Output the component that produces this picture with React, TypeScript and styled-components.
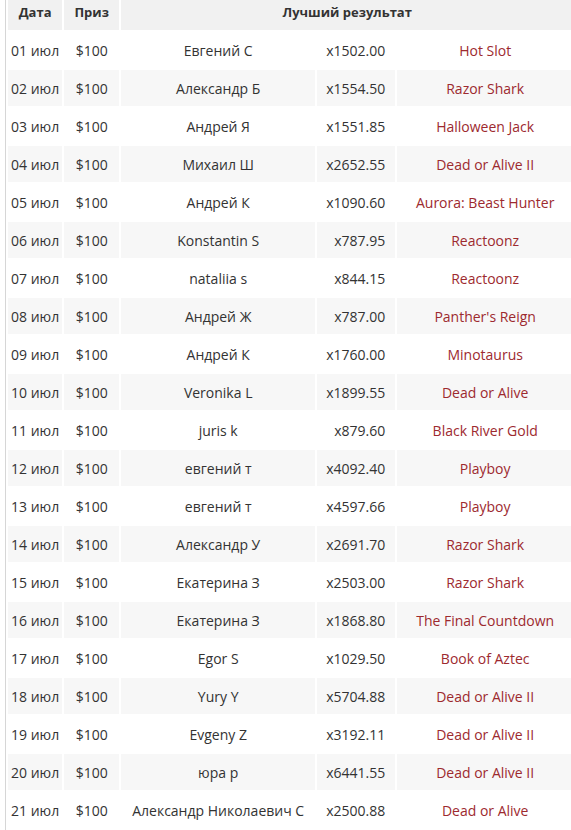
import React from "react";
import styled, { createGlobalStyle } from "styled-components";

const GlobalStyle = createGlobalStyle`
  html, body {
    margin: 0;
    padding: 0;
    background: #fff;
    overflow: hidden;
  }
  body {
    font-family: "Open Sans", "Liberation Sans", Arial, sans-serif;
    color: #333;
  }
`;

const Page = styled.div`
  padding-left: 5px;
  margin-top: -8px;
  width: 571px;
  overflow: hidden;
`;

const Table = styled.table`
  border-left: 1px solid #d6d6d6;
  border-collapse: separate;
  border-spacing: 2px;
  table-layout: fixed;
  font-size: 14px;
`;

const HeadCell = styled.th`
  background: #f1f1f1;
  font-weight: 700;
  font-size: 13px;
  color: #333;
  height: 36px;
  padding: 0;
  text-align: center;
`;

const Row = styled.tr<{ $striped: boolean }>`
  background: ${(p) => (p.$striped ? "#f7f7f7" : "#fff")};
`;

const Cell = styled.td<{ $align?: string }>`
  height: 36px;
  padding: 0 ${(p) => (p.$align === "right" ? "10px" : "3px")} 0 3px;
  text-align: ${(p) => p.$align || "center"};
  white-space: nowrap;
  overflow: hidden;
`;

const GameLink = styled.a`
  color: #9d2a2f;
  text-decoration: none;
`;

type Result = { date: string; name: string; mult: string; game: string };

const results: Result[] = [
  { date: "01 июл", name: "Евгений С", mult: "x1502.00", game: "Hot Slot" },
  { date: "02 июл", name: "Александр Б", mult: "x1554.50", game: "Razor Shark" },
  { date: "03 июл", name: "Андрей Я", mult: "x1551.85", game: "Halloween Jack" },
  { date: "04 июл", name: "Михаил Ш", mult: "x2652.55", game: "Dead or Alive II" },
  { date: "05 июл", name: "Андрей К", mult: "x1090.60", game: "Aurora: Beast Hunter" },
  { date: "06 июл", name: "Konstantin S", mult: "x787.95", game: "Reactoonz" },
  { date: "07 июл", name: "nataliia s", mult: "x844.15", game: "Reactoonz" },
  { date: "08 июл", name: "Андрей Ж", mult: "x787.00", game: "Panther's Reign" },
  { date: "09 июл", name: "Андрей К", mult: "x1760.00", game: "Minotaurus" },
  { date: "10 июл", name: "Veronika L", mult: "x1899.55", game: "Dead or Alive" },
  { date: "11 июл", name: "juris k", mult: "x879.60", game: "Black River Gold" },
  { date: "12 июл", name: "евгений т", mult: "x4092.40", game: "Playboy" },
  { date: "13 июл", name: "евгений т", mult: "x4597.66", game: "Playboy" },
  { date: "14 июл", name: "Александр У", mult: "x2691.70", game: "Razor Shark" },
  { date: "15 июл", name: "Екатерина З", mult: "x2503.00", game: "Razor Shark" },
  { date: "16 июл", name: "Екатерина З", mult: "x1868.80", game: "The Final Countdown" },
  { date: "17 июл", name: "Egor S", mult: "x1029.50", game: "Book of Aztec" },
  { date: "18 июл", name: "Yury Y", mult: "x5704.88", game: "Dead or Alive II" },
  { date: "19 июл", name: "Evgeny Z", mult: "x3192.11", game: "Dead or Alive II" },
  { date: "20 июл", name: "юра р", mult: "x6441.55", game: "Dead or Alive II" },
  { date: "21 июл", name: "Александр Николаевич С", mult: "x2500.88", game: "Dead or Alive" },
];

const App = () => {
  return (
    <Page>
      <GlobalStyle />
      <Table>
        <colgroup>
          <col style={{ width: 53 }} />
          <col style={{ width: 55 }} />
          <col style={{ width: 194 }} />
          <col style={{ width: 78 }} />
          <col style={{ width: 176 }} />
        </colgroup>
        <thead>
          <tr>
            <HeadCell>Дата</HeadCell>
            <HeadCell>Приз</HeadCell>
            <HeadCell colSpan={3}>Лучший результат</HeadCell>
          </tr>
        </thead>
        <tbody>
          {results.map((r, idx) => (
            <Row key={r.date} $striped={idx % 2 === 1}>
              <Cell $align="left">{r.date}</Cell>
              <Cell>$100</Cell>
              <Cell>{r.name}</Cell>
              <Cell $align="right">{r.mult}</Cell>
              <Cell>
                <GameLink href="#">{r.game}</GameLink>
              </Cell>
            </Row>
          ))}
        </tbody>
      </Table>
    </Page>
  );
};

export default App;
